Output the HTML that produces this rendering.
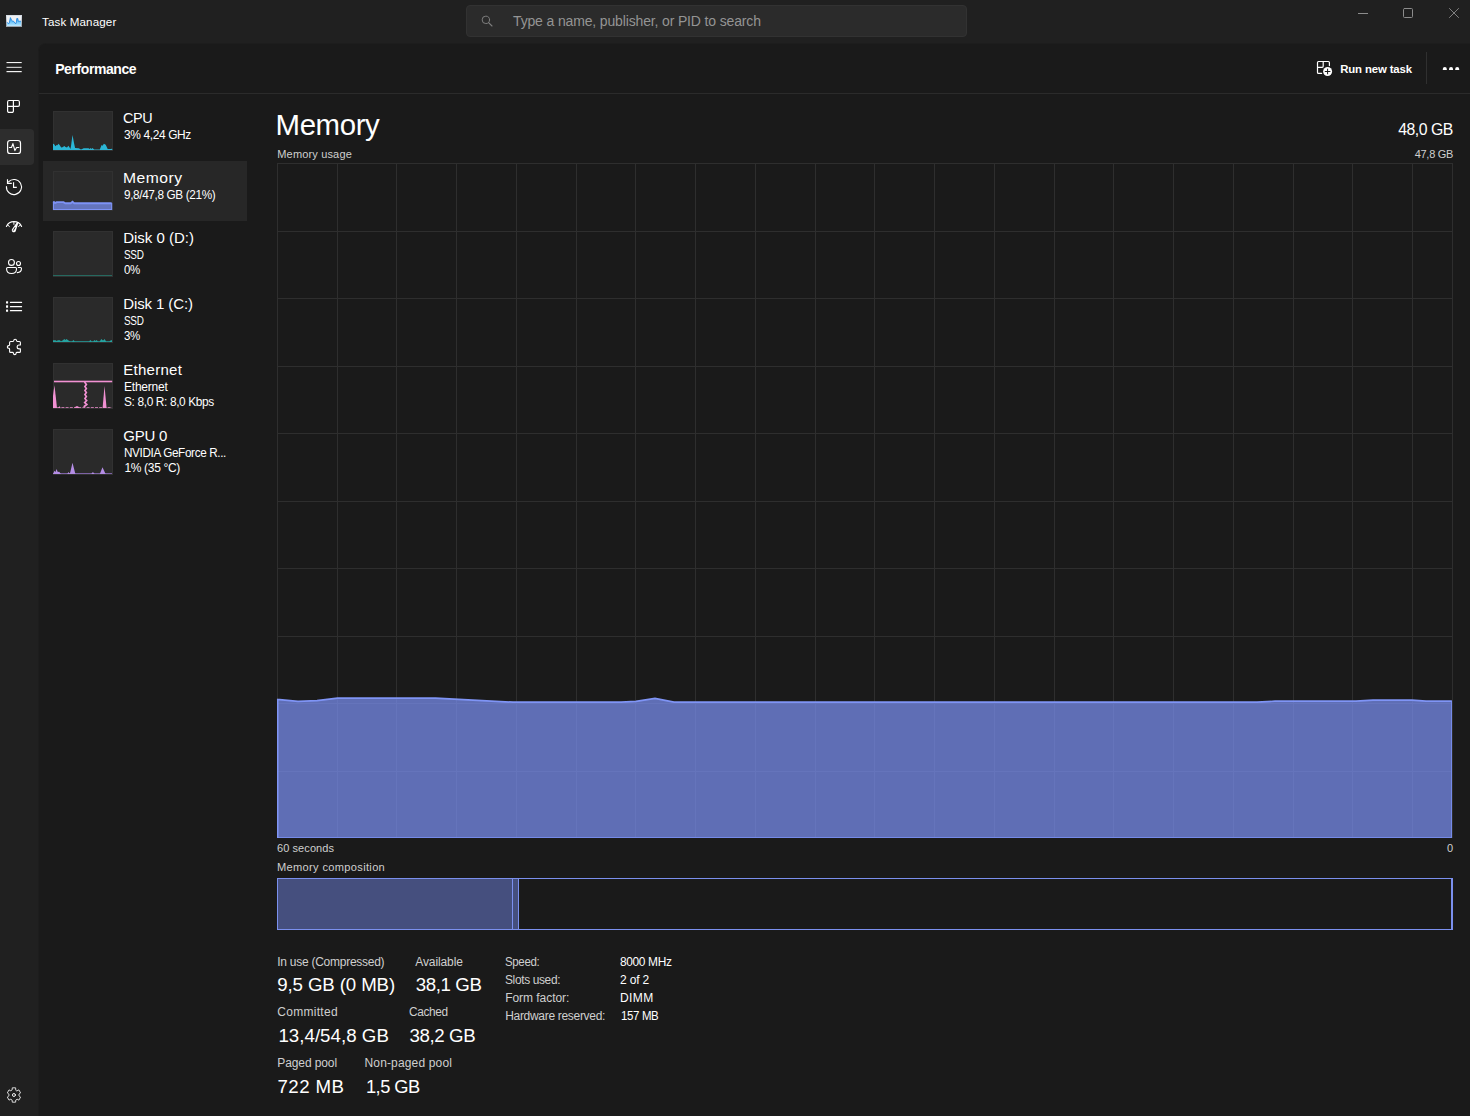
<!DOCTYPE html>
<html><head><meta charset="utf-8"><title>Task Manager</title>
<style>
html,body{margin:0;padding:0;background:#202020;}
body{width:1470px;height:1116px;overflow:hidden;font-family:"Liberation Sans", sans-serif;}
#app{position:relative;width:1470px;height:1116px;background:#202020;overflow:hidden;}
.t{position:absolute;white-space:nowrap;line-height:1;font-family:"Liberation Sans", sans-serif;}
.abs{position:absolute;}

#panel{position:absolute;left:38px;top:43px;width:1432px;height:1073px;box-sizing:border-box;background:#1a1a1a;border-left:1px solid #1d1d1d;border-top:1px solid #1d1d1d;border-top-left-radius:8px;}
#hdrline{position:absolute;left:39px;top:93px;width:1431px;height:1px;background:#2b2b2b;}
#search{position:absolute;left:466px;top:5px;width:501px;height:32px;box-sizing:border-box;background:#2b2b2b;border:1px solid #323232;border-radius:4px;}
#navsel{position:absolute;left:-4px;top:129px;width:38px;height:36px;background:#2d2d2d;border-radius:4px;}
#rowsel{position:absolute;left:43px;top:161px;width:204px;height:60px;background:#272727;}
.thumb{position:absolute;left:53px;width:60px;background:#2a2a2a;}
svg{position:absolute;overflow:visible;}

</style></head><body>
<div id="app">

<div id="search"></div>
<div id="panel"></div>
<div id="hdrline"></div>
<div id="navsel"></div>
<div id="rowsel"></div>
<div class="abs" style="left:1426px;top:52px;width:1px;height:32px;background:#303030"></div>
<div class="thumb" style="top:111px;height:40px"></div>
<div class="thumb" style="top:171px;height:40px"></div>
<div class="thumb" style="top:231px;height:46px"></div>
<div class="thumb" style="top:297px;height:46px"></div>
<div class="thumb" style="top:363px;height:46px"></div>
<div class="thumb" style="top:429px;height:46px"></div>
<svg style="left:0;top:0" width="260" height="500" viewBox="0 0 260 500">
<rect x="53.5" y="111.5" width="59" height="39" fill="none" stroke="#313131" stroke-width="1"/>
<rect x="53.5" y="171.5" width="59" height="39" fill="none" stroke="#313131" stroke-width="1"/>
<rect x="53.5" y="231.5" width="59" height="45" fill="none" stroke="#313131" stroke-width="1"/>
<rect x="53.5" y="297.5" width="59" height="45" fill="none" stroke="#313131" stroke-width="1"/>
<rect x="53.5" y="363.5" width="59" height="45" fill="none" stroke="#313131" stroke-width="1"/>
<rect x="53.5" y="429.5" width="59" height="45" fill="none" stroke="#313131" stroke-width="1"/>
<polygon points="53.00,150.00 53.00,144.00 53.80,143.70 55.40,146.20 56.70,145.00 57.40,145.30 58.50,143.70 59.60,145.00 61.20,147.50 62.50,147.20 64.40,146.00 65.50,147.00 67.00,147.50 68.40,145.80 69.30,147.00 70.40,149.00 71.00,146.00 72.50,135.00 74.00,143.00 75.10,148.00 78.70,148.20 81.00,149.60 83.70,148.20 88.60,148.20 89.50,149.00 90.60,148.00 91.30,149.00 92.40,148.00 94.20,149.40 99.80,149.40 101.60,145.00 102.50,145.80 103.90,143.80 105.70,144.80 107.70,149.00 111.30,149.00 112.00,148.60 112.40,150.00" fill="#2bb6d6" />
<polygon points="53.40,201.90 55.00,203.50 56.70,202.50 63.50,202.50 65.30,203.60 70.70,203.60 72.50,202.20 74.20,203.60 111.70,203.60 111.70,209.50 53.40,209.50" fill="#6474bd" />
<polyline points="53.40,201.50 55.00,203.10 56.70,202.10 63.50,202.10 65.30,203.20 70.70,203.20 72.50,201.80 74.20,203.20 111.70,203.20" fill="none" stroke="#7d92f5" stroke-width="1.9" stroke-linejoin="miter" stroke-linecap="butt"/>
<path d="M53.45,201.5 V209.5 H111.65 V203" fill="none" stroke="#7d92f5" stroke-width="1.1" stroke-linejoin="miter" stroke-linecap="butt"/>
<rect x="53" y="275" width="59" height="1" fill="#26695f"/>
<polygon points="53.00,342.00 53.00,340.30 55.60,340.30 56.50,341.00 58.00,340.30 59.80,340.30 61.00,341.20 62.50,340.50 64.40,339.00 65.40,340.00 66.50,339.00 68.50,340.50 70.00,341.20 72.30,341.20 73.40,340.00 74.60,341.20 89.20,341.20 90.40,340.00 91.60,341.20 93.40,341.20 94.50,340.10 95.50,341.00 96.50,340.10 97.80,341.20 99.80,341.20 101.40,339.00 102.60,340.20 103.50,340.20 104.60,339.00 106.00,341.20 109.50,341.20 111.00,340.20 112.00,340.20 112.00,342.00" fill="#25a3a1" />
<rect x="54" y="380.7" width="58.2" height="1.6" fill="#f291d3"/>
<polygon points="53.00,408.00 53.00,396.00 54.40,385.30 55.60,395.00 57.00,408.00" fill="#f291d3" />
<polygon points="102.60,408.00 104.50,386.00 106.60,408.00" fill="#f291d3" />
<path d="M84.9,382.5 L86.4,384.5 L84.9,386.5 L86.4,388.5 L84.9,390.5 L86.4,392.5 L84.9,394.5 L86.4,396.5 L84.9,398.5 L86.6,400.5 L84.7,402.5 L86.8,404.5 L84.2,406.5" fill="none" stroke="#f291d3" stroke-width="1.7" stroke-dasharray="1.6 0.9" stroke-linecap="round"/>
<line x1="53" y1="407.5" x2="112" y2="407.5" stroke="#f291d3" stroke-width="1" stroke-opacity="0.75" stroke-dasharray="3 1.2"/>
<polygon points="58.50,408.00 59.50,406.00 60.50,408.00" fill="#f291d3" />
<polygon points="74.50,408.00 76.00,406.30 78.00,406.30 79.50,408.00" fill="#f291d3" />
<rect x="53" y="473" width="59" height="1" fill="#7c62a4"/>
<polygon points="53.00,474.00 54.50,470.80 55.50,472.00 56.50,469.00 57.80,472.00 59.20,471.80 61.00,474.00 67.30,474.00 68.40,472.00 69.50,473.50 70.20,472.50 72.50,462.80 75.00,472.50 75.40,474.00 91.30,474.00 92.90,472.00 94.60,474.00 99.80,474.00 102.50,467.20 105.60,474.00" fill="#b48de5" />
</svg>
<svg style="left:277px;top:163px" width="1176" height="675" viewBox="0 0 1176 675">
<rect x="0.5" y="0.5" width="1175" height="674" fill="none" stroke="#2e2e2e" stroke-width="1"/>
<rect x="60" y="0" width="1" height="675" fill="#2e2e2e"/><rect x="119" y="0" width="1" height="675" fill="#2e2e2e"/><rect x="179" y="0" width="1" height="675" fill="#2e2e2e"/><rect x="239" y="0" width="1" height="675" fill="#2e2e2e"/><rect x="299" y="0" width="1" height="675" fill="#2e2e2e"/><rect x="358" y="0" width="1" height="675" fill="#2e2e2e"/><rect x="418" y="0" width="1" height="675" fill="#2e2e2e"/><rect x="478" y="0" width="1" height="675" fill="#2e2e2e"/><rect x="538" y="0" width="1" height="675" fill="#2e2e2e"/><rect x="597" y="0" width="1" height="675" fill="#2e2e2e"/><rect x="657" y="0" width="1" height="675" fill="#2e2e2e"/><rect x="717" y="0" width="1" height="675" fill="#2e2e2e"/><rect x="777" y="0" width="1" height="675" fill="#2e2e2e"/><rect x="836" y="0" width="1" height="675" fill="#2e2e2e"/><rect x="896" y="0" width="1" height="675" fill="#2e2e2e"/><rect x="956" y="0" width="1" height="675" fill="#2e2e2e"/><rect x="1016" y="0" width="1" height="675" fill="#2e2e2e"/><rect x="1075" y="0" width="1" height="675" fill="#2e2e2e"/><rect x="1135" y="0" width="1" height="675" fill="#2e2e2e"/><rect x="0" y="68" width="1176" height="1" fill="#2e2e2e"/><rect x="0" y="135" width="1176" height="1" fill="#2e2e2e"/><rect x="0" y="203" width="1176" height="1" fill="#2e2e2e"/><rect x="0" y="270" width="1176" height="1" fill="#2e2e2e"/><rect x="0" y="338" width="1176" height="1" fill="#2e2e2e"/><rect x="0" y="405" width="1176" height="1" fill="#2e2e2e"/><rect x="0" y="473" width="1176" height="1" fill="#2e2e2e"/><rect x="0" y="540" width="1176" height="1" fill="#2e2e2e"/><rect x="0" y="608" width="1176" height="1" fill="#2e2e2e"/>
<polygon points="0,536.3 0.0,536.3 21.0,538.4 40.0,537.6 60.5,535.2 158.5,535.2 236.0,539.2 344.0,539.2 359.0,538.4 378.0,535.4 397.0,539.2 980.0,539.2 998.0,538.2 1079.0,538.2 1096.0,537.1 1135.0,537.1 1149.0,538.2 1174.5,538.2 1175,538.2 1175,675 0,675" fill="#7c91f5" fill-opacity="0.71" stroke="none"/>
<rect x="0" y="674" width="1175" height="1" fill="#758ae8"/>
<rect x="1174" y="538.2" width="1" height="136.8" fill="#758ae8"/>
<rect x="0" y="536.3" width="1.5" height="138.7" fill="#8095f6"/>
<polyline points="0.2,536.3 0.0,536.3 21.0,538.4 40.0,537.6 60.5,535.2 158.5,535.2 236.0,539.2 344.0,539.2 359.0,538.4 378.0,535.4 397.0,539.2 980.0,539.2 998.0,538.2 1079.0,538.2 1096.0,537.1 1135.0,537.1 1149.0,538.2 1174.5,538.2 1174.9,538.2" fill="none" stroke="#7f94f5" stroke-width="1.7" stroke-linejoin="miter" stroke-linecap="butt"/>
</svg>
<svg style="left:277px;top:878px" width="1176" height="52" viewBox="0 0 1176 52">
<rect x="0" y="0" width="236" height="52" fill="#454f7e"/>
<rect x="236" y="0" width="6" height="52" fill="#454f7e"/>
<rect x="0.5" y="0.5" width="1175" height="51" fill="none" stroke="#7b90ee" stroke-width="1"/>
<rect x="1174" y="0" width="2" height="52" fill="#7b90ee"/>
<rect x="235" y="0" width="1" height="52" fill="#7b90ee"/>
<rect x="241" y="0" width="1" height="52" fill="#7b90ee"/>
</svg>
<svg style="left:0;top:0" width="1470" height="1116" viewBox="0 0 1470 1116" fill="none" stroke-linecap="round" stroke-linejoin="round">
<defs><linearGradient id="ag" x1="0" y1="0" x2="0" y2="1"><stop offset="0" stop-color="#2f9cec"/><stop offset="0.55" stop-color="#74c8fb"/><stop offset="1" stop-color="#bfeaff"/></linearGradient>
<linearGradient id="af" x1="0" y1="0" x2="0" y2="1"><stop offset="0" stop-color="#d8dfe7"/><stop offset="1" stop-color="#9aa1a9"/></linearGradient></defs>
<rect x="6" y="15" width="16" height="12" fill="url(#af)"/>
<rect x="7" y="16" width="14" height="10" fill="#eef0f3"/>
<path d="M7,22.2 L8.3,23.6 L9.2,23.3 L10.4,17.6 L11.7,20.4 L12.6,21.1 L13.7,21.3 L15,23.4 L16.2,23.3 L16.8,18.5 L17.8,18.5 L18.3,21.3 L21,21.2 V26 H7 Z" fill="url(#ag)" stroke="none"/>
<path d="M7,22.2 L8.3,23.6 L9.2,23.3 L10.4,17.6 L11.7,20.4 L12.6,21.1 L13.7,21.3 L15,23.4 L16.2,23.3 L16.8,18.5 L17.8,18.5 L18.3,21.3 L21,21.2" stroke="#1b83de" stroke-width="0.8" stroke-linecap="butt"/>
<rect x="6.5" y="62" width="15.2" height="1.1" fill="#ffffff" fill-opacity="0.95"/>
<rect x="6.5" y="66.8" width="15.2" height="1.2" fill="#ffffff" fill-opacity="0.75"/>
<rect x="6.5" y="71" width="15.2" height="1.2" fill="#ffffff" fill-opacity="0.95"/>
<path d="M9,100.5 H18 a1.4,1.4 0 0 1 1.4,1.4 V105 a1.4,1.4 0 0 1 -1.4,1.4 H13.4 V111 a1.4,1.4 0 0 1 -1.4,1.4 H9 a1.4,1.4 0 0 1 -1.4,-1.4 V101.9 a1.4,1.4 0 0 1 1.4,-1.4 Z M13.4,100.5 V106.4 M7.6,106.4 H13.4" stroke="#ffffff" stroke-width="1.2"/>
<rect x="7.6" y="140.5" width="12.9" height="13" rx="2.6" stroke="#ffffff" stroke-width="1.2"/>
<path d="M9.4,147.5 H11.5 L12.9,143.6 L14.9,150.6 L16.6,147.5 H18.8" stroke="#ffffff" stroke-width="1.1"/>
<path d="M7.5,179.3 V183.4 H11.8" stroke="#ffffff" stroke-width="1.15" stroke-linecap="butt" stroke-linejoin="miter"/>
<path d="M8.5,181.8 A7.55,7.55 0 1 1 6.42,186.5" stroke="#ffffff" stroke-width="1.1"/>
<path d="M13.55,182.3 V187.4 H16.8" stroke="#ffffff" stroke-width="1.15" stroke-linecap="butt" stroke-linejoin="miter"/>
<path d="M6.4,226.4 A8.45,8.45 0 0 1 21.6,226.4" stroke="#ffffff" stroke-width="1.1"/>
<path d="M7.3,224.7 L9.4,226.5 M20.7,224.7 L18.6,226.5 M13.9,221.6 V224.4" stroke="#ffffff" stroke-width="1.0"/>
<path d="M17.1,222.1 L18.5,222.5 L15.9,230.5 A2.05,2.05 0 1 1 12.2,229.1 Z" fill="#ffffff" stroke="none"/>
<path d="M13.4,230.3 L14.9,227.6" stroke="#202020" stroke-width="1.0"/>
<circle cx="11.45" cy="262.45" r="2.95" stroke="#ffffff" stroke-width="1.1"/>
<circle cx="18.5" cy="263.45" r="2.0" stroke="#ffffff" stroke-width="1.1"/>
<path d="M7.6,267.5 H15.5 a1,1 0 0 1 1,1 V269 c0,2.6 -2,4.5 -4.95,4.5 s-4.95,-1.9 -4.95,-4.5 V268.5 a1,1 0 0 1 1,-1 Z" stroke="#ffffff" stroke-width="1.1"/>
<path d="M18.3,267.5 H20.5 a1,1 0 0 1 1,1 c0,2.4 -1.6,4.0 -4.3,4.1" stroke="#ffffff" stroke-width="1.1"/>
<rect x="6" y="301.3" width="2.1" height="2.3" rx="0.5" fill="#ffffff"/>
<rect x="9.9" y="301.83" width="12.2" height="1.25" rx="0.5" fill="#ffffff"/>
<rect x="6" y="305.35" width="2.1" height="2.3" rx="0.5" fill="#ffffff"/>
<rect x="9.9" y="305.88" width="12.2" height="1.25" rx="0.5" fill="#ffffff"/>
<rect x="6" y="309.40000000000003" width="2.1" height="2.3" rx="0.5" fill="#ffffff"/>
<rect x="9.9" y="309.93" width="12.2" height="1.25" rx="0.5" fill="#ffffff"/>
<path d="M9.6,342.5 a1,1 0 0 1 1,-1 H12.9 c0.7,0 0.9,-0.4 0.9,-0.9 a1.35,1.35 0 0 1 2.7,0 c0,0.5 0.2,0.9 0.9,0.9 H19.4 a1,1 0 0 1 1,1 V345 H19.1 a1.95,1.95 0 0 0 0,3.9 H20.4 V351.4 a1,1 0 0 1 -1,1 H17 c-0.7,0 -0.9,0.4 -0.9,0.9 a1.35,1.35 0 0 1 -2.7,0 c0,-0.5 -0.2,-0.9 -0.9,-0.9 H10.6 a1,1 0 0 1 -1,-1 V349.2 c0,-0.7 -0.4,-0.9 -0.9,-0.9 a1.35,1.35 0 0 1 0,-2.7 c0.5,0 0.9,-0.2 0.9,-0.9 Z" stroke="#ffffff" stroke-width="1.1"/>
<g transform="translate(13.95,1095.0) scale(0.93,1)"><path d="M1.95,-5.09 L1.79,-7.18 L-1.79,-7.18 L-1.95,-5.09 L-3.43,-4.24 L-5.32,-5.14 L-7.11,-2.04 L-5.38,-0.85 L-5.38,0.85 L-7.11,2.04 L-5.32,5.14 L-3.43,4.24 L-1.95,5.09 L-1.79,7.18 L1.79,7.18 L1.95,5.09 L3.43,4.24 L5.32,5.14 L7.11,2.04 L5.38,0.85 L5.38,-0.85 L7.11,-2.04 L5.32,-5.14 L3.43,-4.24 Z" stroke="#e8e8e8" stroke-width="0.95"/></g>
<circle cx="13.95" cy="1095.0" r="1.5" stroke="#f0f0f0" stroke-width="1.0"/>
<circle cx="485.85" cy="19.85" r="3.7" stroke="#7e7e7e" stroke-width="1.0"/>
<path d="M488.6,22.6 L492,26" stroke="#7e7e7e" stroke-width="1.1"/>
<rect x="1358" y="13" width="10" height="1" fill="#8c8c8c"/>
<rect x="1403.5" y="8.5" width="9" height="9" rx="1.0" stroke="#8c8c8c" stroke-width="1"/>
<path d="M1449.2,8.2 L1458.8,17.8 M1458.8,8.2 L1449.2,17.8" stroke="#8c8c8c" stroke-width="0.9" stroke-linecap="butt"/>
<path d="M1321.6,73.4 H1318.5 a1,1 0 0 1 -1,-1 V62.5 a1,1 0 0 1 1,-1 H1328.4 a1,1 0 0 1 1,1 V65.6 M1323.2,61.5 V66.3 a1,1 0 0 1 -1,1 H1317.5" stroke="#ffffff" stroke-width="1.2"/>
<circle cx="1327.6" cy="71.5" r="4.5" fill="#ffffff"/>
<path d="M1325.2,71.5 H1330 M1327.6,69.1 V73.9" stroke="#1a1a1a" stroke-width="1.0"/>
<path d="M1442.8,70.1 V68.9 a2.0,1.85 0 0 1 4.0,0 V70.1 Z" fill="#ffffff"/>
<path d="M1449.05,70.1 V68.9 a2.0,1.85 0 0 1 4.0,0 V70.1 Z" fill="#ffffff"/>
<path d="M1455.2,70.1 V68.9 a2.0,1.85 0 0 1 4.0,0 V70.1 Z" fill="#ffffff"/>
</svg>

<span class="t" id="t0" style="font-size:11.6px;color:#ffffff;top:16.18px;letter-spacing:0.129px;left:42.00px;transform-origin:0 0;">Task Manager</span>
<span class="t" id="t1" style="font-size:14px;color:#949494;top:14.15px;letter-spacing:-0.147px;left:513.00px;transform-origin:0 0;">Type a name, publisher, or PID to search</span>
<span class="t" id="t2" style="font-size:14px;color:#ffffff;top:62.15px;font-weight:700;letter-spacing:-0.413px;left:55.20px;transform-origin:0 0;">Performance</span>
<span class="t" id="t3" style="font-size:11.4px;color:#ffffff;top:63.85px;font-weight:700;letter-spacing:-0.145px;left:1340.20px;transform-origin:0 0;">Run new task</span>
<span class="t" id="t4" style="font-size:15px;color:#fff;top:110.30px;letter-spacing:-0.450px;left:123.20px;transform-origin:0 0;transform:scaleX(0.9596);">CPU</span>
<span class="t" id="t5" style="font-size:12px;color:#fff;top:128.84px;letter-spacing:-0.360px;left:123.60px;transform-origin:0 0;transform:scaleX(0.9927);">3% 4,24 GHz</span>
<span class="t" id="t6" style="font-size:15px;color:#fff;top:170.30px;letter-spacing:0.450px;left:123.20px;transform-origin:0 0;transform:scaleX(1.0452);">Memory</span>
<span class="t" id="t7" style="font-size:12px;color:#fff;top:188.84px;letter-spacing:-0.360px;left:123.60px;transform-origin:0 0;transform:scaleX(0.9791);">9,8/47,8 GB (21%)</span>
<span class="t" id="t8" style="font-size:15px;color:#fff;top:230.30px;letter-spacing:0.001px;left:123.20px;transform-origin:0 0;">Disk 0 (D:)</span>
<span class="t" id="t9" style="font-size:12px;color:#fff;top:248.84px;letter-spacing:-0.360px;left:123.80px;transform-origin:0 0;transform:scaleX(0.8274);">SSD</span>
<span class="t" id="t10" style="font-size:12px;color:#fff;top:263.84px;letter-spacing:-0.360px;left:123.80px;transform-origin:0 0;transform:scaleX(0.9579);">0%</span>
<span class="t" id="t11" style="font-size:15px;color:#fff;top:296.30px;letter-spacing:-0.099px;left:123.20px;transform-origin:0 0;">Disk 1 (C:)</span>
<span class="t" id="t12" style="font-size:12px;color:#fff;top:314.84px;letter-spacing:-0.360px;left:123.80px;transform-origin:0 0;transform:scaleX(0.8274);">SSD</span>
<span class="t" id="t13" style="font-size:12px;color:#fff;top:329.84px;letter-spacing:-0.360px;left:123.80px;transform-origin:0 0;transform:scaleX(0.9579);">3%</span>
<span class="t" id="t14" style="font-size:15px;color:#fff;top:362.30px;letter-spacing:0.276px;left:123.20px;transform-origin:0 0;">Ethernet</span>
<span class="t" id="t15" style="font-size:12px;color:#fff;top:380.84px;letter-spacing:-0.214px;left:124.00px;transform-origin:0 0;">Ethernet</span>
<span class="t" id="t16" style="font-size:12px;color:#fff;top:395.84px;letter-spacing:-0.360px;left:123.80px;transform-origin:0 0;transform:scaleX(0.9891);">S: 8,0 R: 8,0 Kbps</span>
<span class="t" id="t17" style="font-size:15px;color:#fff;top:428.30px;letter-spacing:-0.216px;left:123.20px;transform-origin:0 0;">GPU 0</span>
<span class="t" id="t18" style="font-size:12px;color:#fff;top:446.84px;letter-spacing:-0.360px;left:124.00px;transform-origin:0 0;transform:scaleX(0.9760);">NVIDIA GeForce R...</span>
<span class="t" id="t19" style="font-size:12px;color:#fff;top:461.84px;letter-spacing:-0.316px;left:124.40px;transform-origin:0 0;">1% (35 °C)</span>
<span class="t" id="t20" style="font-size:29.4px;color:#fff;top:110.11px;letter-spacing:-0.399px;left:275.60px;transform-origin:0 0;">Memory</span>
<span class="t" id="t21" style="font-size:15.8px;color:#fff;top:121.63px;letter-spacing:-0.474px;right:17.17px;transform-origin:100% 0;">48,0 GB</span>
<span class="t" id="t22" style="font-size:11px;color:#cfcfcf;top:148.69px;letter-spacing:0.157px;left:277.30px;transform-origin:0 0;">Memory usage</span>
<span class="t" id="t23" style="font-size:11px;color:#cfcfcf;top:148.69px;letter-spacing:-0.295px;right:16.99px;transform-origin:100% 0;">47,8 GB</span>
<span class="t" id="t24" style="font-size:11px;color:#cfcfcf;top:842.69px;letter-spacing:0.080px;left:277.00px;transform-origin:0 0;">60 seconds</span>
<span class="t" id="t25" style="font-size:11px;color:#cfcfcf;top:842.69px;right:16.80px;transform-origin:100% 0;">0</span>
<span class="t" id="t26" style="font-size:11px;color:#cfcfcf;top:861.69px;letter-spacing:0.330px;left:277.30px;transform-origin:0 0;transform:scaleX(1.0065);">Memory composition</span>
<span class="t" id="t27" style="font-size:12px;color:#cfcfcf;top:955.54px;letter-spacing:-0.265px;left:277.30px;transform-origin:0 0;">In use (Compressed)</span>
<span class="t" id="t28" style="font-size:18.7px;color:#fff;top:975.67px;letter-spacing:-0.130px;left:277.30px;transform-origin:0 0;">9,5 GB (0 MB)</span>
<span class="t" id="t29" style="font-size:12px;color:#cfcfcf;top:955.54px;letter-spacing:-0.113px;left:415.30px;transform-origin:0 0;">Available</span>
<span class="t" id="t30" style="font-size:18.7px;color:#fff;top:975.67px;letter-spacing:-0.383px;left:415.70px;transform-origin:0 0;">38,1 GB</span>
<span class="t" id="t31" style="font-size:12px;color:#cfcfcf;top:1006.44px;letter-spacing:0.283px;left:277.30px;transform-origin:0 0;">Committed</span>
<span class="t" id="t32" style="font-size:18.7px;color:#fff;top:1026.77px;letter-spacing:0.031px;left:278.40px;transform-origin:0 0;">13,4/54,8 GB</span>
<span class="t" id="t33" style="font-size:12px;color:#cfcfcf;top:1006.44px;letter-spacing:-0.360px;left:409.40px;transform-origin:0 0;transform:scaleX(0.9874);">Cached</span>
<span class="t" id="t34" style="font-size:18.7px;color:#fff;top:1026.77px;letter-spacing:-0.416px;left:409.60px;transform-origin:0 0;">38,2 GB</span>
<span class="t" id="t35" style="font-size:12px;color:#cfcfcf;top:1057.44px;letter-spacing:-0.106px;left:277.30px;transform-origin:0 0;">Paged pool</span>
<span class="t" id="t36" style="font-size:18.7px;color:#fff;top:1077.77px;letter-spacing:0.375px;left:277.60px;transform-origin:0 0;">722 MB</span>
<span class="t" id="t37" style="font-size:12px;color:#cfcfcf;top:1057.44px;letter-spacing:0.152px;left:364.50px;transform-origin:0 0;">Non-paged pool</span>
<span class="t" id="t38" style="font-size:18.7px;color:#fff;top:1077.77px;letter-spacing:-0.561px;left:366.00px;transform-origin:0 0;transform:scaleX(0.9783);">1,5 GB</span>
<span class="t" id="t39" style="font-size:12px;color:#cfcfcf;top:955.54px;letter-spacing:-0.360px;left:505.00px;transform-origin:0 0;transform:scaleX(0.9564);">Speed:</span>
<span class="t" id="t40" style="font-size:12px;color:#cfcfcf;top:973.54px;letter-spacing:-0.360px;left:505.00px;transform-origin:0 0;transform:scaleX(0.9947);">Slots used:</span>
<span class="t" id="t41" style="font-size:12px;color:#cfcfcf;top:991.54px;letter-spacing:-0.046px;left:505.20px;transform-origin:0 0;">Form factor:</span>
<span class="t" id="t42" style="font-size:12px;color:#cfcfcf;top:1009.54px;letter-spacing:-0.306px;left:505.20px;transform-origin:0 0;">Hardware reserved:</span>
<span class="t" id="t43" style="font-size:12px;color:#fff;top:955.54px;letter-spacing:-0.360px;left:620.00px;transform-origin:0 0;transform:scaleX(0.9942);">8000 MHz</span>
<span class="t" id="t44" style="font-size:12px;color:#fff;top:973.54px;letter-spacing:-0.170px;left:620.00px;transform-origin:0 0;">2 of 2</span>
<span class="t" id="t45" style="font-size:12px;color:#fff;top:991.54px;letter-spacing:0.360px;left:620.40px;transform-origin:0 0;transform:scaleX(1.0030);">DIMM</span>
<span class="t" id="t46" style="font-size:12px;color:#fff;top:1009.54px;letter-spacing:-0.360px;left:620.80px;transform-origin:0 0;transform:scaleX(0.9547);">157 MB</span>
</div>
</body></html>
